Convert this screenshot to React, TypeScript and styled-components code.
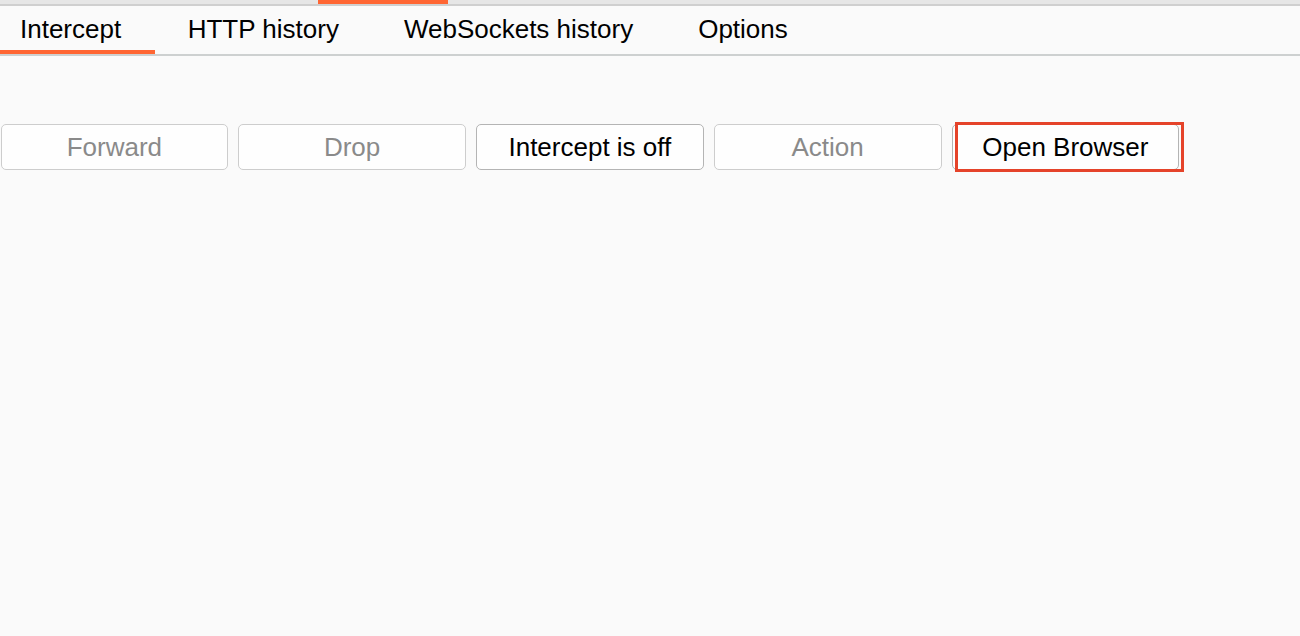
import React from "react";
import styled, { createGlobalStyle } from "styled-components";

const GlobalStyle = createGlobalStyle`
  html, body {
    margin: 0;
    padding: 0;
    background: #fafafa;
    font-family: "Liberation Sans", Arial, Helvetica, sans-serif;
  }
`;

const tabs = ["Intercept", "HTTP history", "WebSockets history", "Options"];

const buttons = [
  { label: "Forward", enabled: false },
  { label: "Drop", enabled: false },
  { label: "Intercept is off", enabled: true },
  { label: "Action", enabled: false },
  { label: "Open Browser", enabled: true, marked: true },
];

const App = () => {
  return (
    <Page>
      <GlobalStyle />
      <TopStrip>
        <TopMarker />
      </TopStrip>
      <TabBar>
        {tabs.map((tab, index) => (
          <Tab key={"tab_" + tab} active={index === 0}>
            {tab}
          </Tab>
        ))}
      </TabBar>
      <Toolbar>
        {buttons.map((b) => (
          <ButtonSlot key={"btn_" + b.label}>
            <ToolButton enabled={b.enabled}>{b.label}</ToolButton>
            {b.marked && <Highlight />}
          </ButtonSlot>
        ))}
      </Toolbar>
    </Page>
  );
};

export default App;

const Page = styled.div`
  width: 1300px;
  height: 636px;
  background: #fafafa;
  overflow: hidden;
`;

const TopStrip = styled.div`
  height: 4px;
  background: #e6e6e6;
  border-bottom: 2px solid #cfcfcf;
  padding-left: 318px;
`;

const TopMarker = styled.div`
  width: 130px;
  height: 4px;
  background: #ff6633;
`;

const TabBar = styled.div`
  display: flex;
  height: 48px;
  border-bottom: 2px solid #cdd0d0;
`;

const Tab = styled.div<{ active?: boolean }>`
  display: flex;
  align-items: center;
  padding: 2px 32.5px 0 32.5px;
  font-size: 26px;
  color: #000;
  box-sizing: border-box;
  border-bottom: 4px solid ${(p) => (p.active ? "#ff6633" : "transparent")};
  &:first-child {
    padding-left: 20px;
    padding-right: 34px;
  }
`;

const Toolbar = styled.div`
  display: flex;
  gap: 10px;
  margin-top: 68px;
  padding-left: 0.5px;
`;

const ButtonSlot = styled.div`
  position: relative;
`;

const ToolButton = styled.div<{ enabled?: boolean }>`
  width: 227.75px;
  height: 46px;
  box-sizing: border-box;
  display: flex;
  align-items: center;
  justify-content: center;
  border-radius: 5px;
  background: #fefefe;
  border: 1.5px solid ${(p) => (p.enabled ? "#b4b4b4" : "#cdcdcd")};
  color: ${(p) => (p.enabled ? "#000" : "#8a8a8a")};
  font-size: 26px;
`;

const Highlight = styled.div`
  position: absolute;
  left: 3px;
  top: -2px;
  width: 229px;
  height: 50px;
  box-sizing: border-box;
  border: 3px solid #e5432a;
  pointer-events: none;
`;
